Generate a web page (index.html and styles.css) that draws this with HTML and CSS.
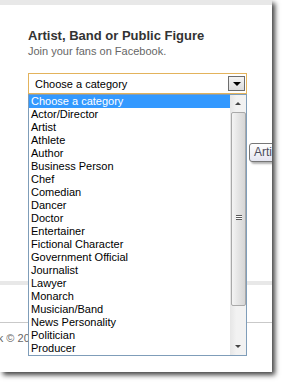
FILE: index.html
```html
<!DOCTYPE html>
<html>
<head>
<meta charset="utf-8">
<link rel="stylesheet" href="styles.css">
</head>
<body>
<div class="panel">
  <div class="topbar"></div>
  <div class="header">
    <div class="title">Artist, Band or Public Figure</div>
    <div class="subtitle">Join your fans on Facebook.</div>
    <div class="select">
      <span class="select-text">Choose a category</span>
      <span class="select-btn"><span class="tri-down"></span></span>
    </div>
  </div>
  <div class="band"></div>
  <div class="rule"></div>
  <div class="footer"><span class="footer-text">Facebook © 2010</span></div>

  <div class="list">
    <ul class="items">
      <li class="sel">Choose a category</li>
      <li>Actor/Director</li>
      <li>Artist</li>
      <li>Athlete</li>
      <li>Author</li>
      <li>Business Person</li>
      <li>Chef</li>
      <li>Comedian</li>
      <li>Dancer</li>
      <li>Doctor</li>
      <li>Entertainer</li>
      <li>Fictional Character</li>
      <li>Government Official</li>
      <li>Journalist</li>
      <li>Lawyer</li>
      <li>Monarch</li>
      <li>Musician/Band</li>
      <li>News Personality</li>
      <li>Politician</li>
      <li>Producer</li>
    </ul>
    <div class="scrollbar">
      <div class="sb-btn"><span class="sb-up"></span></div>
      <div class="sb-thumb"><span class="grip"></span></div>
      <div class="sb-track"></div>
      <div class="sb-btn"><span class="sb-down"></span></div>
    </div>
  </div>

  <div class="tooltip">Artist</div>
</div>
</body>
</html>
```
FILE: styles.css
```css
html, body {
  margin: 0;
  padding: 0;
  background: #fff;
}
body {
  width: 287px;
  height: 389px;
  overflow: hidden;
  font-family: "Liberation Sans", Arial, sans-serif;
}
.panel {
  position: relative;
  width: 272px;
  height: 372px;
  background: #fff;
  overflow: hidden;
  box-shadow: 3px 3px 5px rgba(0, 0, 0, 0.75);
}
.topbar {
  height: 5px;
  background: #e8e8e8;
}
.header {
  padding: 23px 0 0 28px;
}
.title {
  font-weight: bold;
  font-size: 13px;
  line-height: 16px;
  color: #333;
}
.subtitle {
  font-size: 11px;
  line-height: 14px;
  color: #666;
}
.select {
  box-sizing: border-box;
  margin-top: 15px;
  width: 219px;
  height: 21px;
  border: 1px solid #e3b35c;
  display: flex;
  align-items: center;
  padding: 0 1px 0 6px;
  font-size: 11px;
  color: #000;
}
.select-text {
  flex: 1;
}
.select-btn {
  box-sizing: border-box;
  width: 17px;
  height: 15px;
  border: 1px solid #6d6d6d;
  background: linear-gradient(#f4f4f4, #dcdcdc);
  display: flex;
  align-items: center;
  justify-content: center;
}
.tri-down {
  width: 0;
  height: 0;
  border-left: 4px solid transparent;
  border-right: 4px solid transparent;
  border-top: 4px solid #000;
  margin-top: 1px;
}
.band {
  margin-top: 187px;
  height: 4px;
  background: #e8e8e8;
}
.rule {
  margin-top: 37px;
  height: 1px;
  background: #c9c9c9;
}
.footer {
  padding-top: 8px;
  font-size: 11px;
  line-height: 14px;
  color: #666;
  white-space: nowrap;
}
.footer-text {
  display: inline-block;
  margin-left: -45px;
}
.list {
  position: absolute;
  left: 28px;
  top: 94px;
  box-sizing: border-box;
  width: 219px;
  height: 262px;
  border: 1px solid #7f9db9;
  background: #fff;
  display: flex;
}
.items {
  list-style: none;
  margin: 0;
  padding: 0;
  flex: 1;
  font-size: 11px;
  line-height: 13px;
  color: #000;
}
.items li {
  height: 13px;
  padding-left: 2px;
  white-space: nowrap;
}
.items li.sel {
  background: #3399ff;
  color: #fff;
}
.scrollbar {
  width: 16px;
  display: flex;
  flex-direction: column;
  background: linear-gradient(to right, #e6e6e6, #f2f2f2 40%, #f2f2f2);
}
.sb-btn {
  height: 17px;
  display: flex;
  align-items: center;
  justify-content: center;
}
.sb-up {
  width: 0;
  height: 0;
  border-left: 3px solid transparent;
  border-right: 3px solid transparent;
  border-bottom: 3px solid #444;
}
.sb-down {
  width: 0;
  height: 0;
  border-left: 3px solid transparent;
  border-right: 3px solid transparent;
  border-top: 3px solid #444;
}
.sb-thumb {
  box-sizing: border-box;
  height: 194px;
  margin: 0 0 0 1px;
  border: 1px solid #a9a9a9;
  border-radius: 2px;
  background: linear-gradient(to right, #f4f4f4, #e4e4e4 50%, #d6d6d6);
  display: flex;
  align-items: center;
  justify-content: center;
}
.grip {
  width: 6px;
  height: 5px;
  background: repeating-linear-gradient(#5a5a5a 0 1px, #ffffff 1px 2px);
  margin-top: 16px;
}
.sb-track {
  flex: 1;
}
.tooltip {
  position: absolute;
  left: 249px;
  top: 143px;
  width: 40px;
  height: 19px;
  box-sizing: border-box;
  border: 1px solid #767676;
  border-radius: 3px;
  background: linear-gradient(#ffffff, #e4e5f0);
  box-shadow: 2px 2px 2px rgba(0, 0, 0, 0.3);
  font-size: 12px;
  line-height: 17px;
  padding-left: 4px;
  color: #4c4c5c;
}
```
